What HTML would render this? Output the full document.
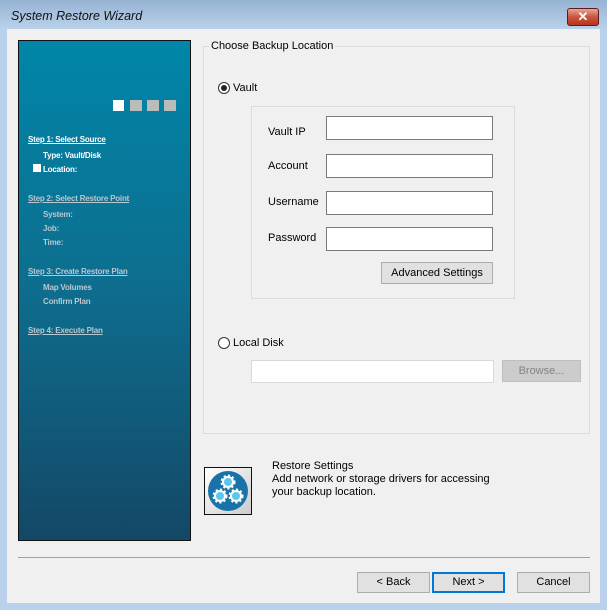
<!DOCTYPE html>
<html><head><style>
*{margin:0;padding:0;box-sizing:border-box}
body{width:607px;height:610px;background:#b9d1ea;font-family:"Liberation Sans",sans-serif;font-size:11px;color:#000;position:relative;overflow:hidden}
.a{position:absolute}
.title{left:0;top:0;width:607px;height:29px;background:linear-gradient(#97b3d3,#b9d1ea)}
.client{left:7px;top:29px;width:593px;height:574px;background:#f0f0f0}
.panel{left:18px;top:40px;width:173px;height:501px;border:1px solid #111;background:linear-gradient(#0086a8,#0e6d8e 50%,#134866)}
.s{font-size:8px;font-weight:bold;color:#fff;letter-spacing:-0.2px}
.u{text-decoration:underline}
.g{color:#b9c7d0}
.inp{background:#fff;border:1px solid #7a7a7a}
.btn{background:#e1e1e1;border:1px solid #adadad;text-align:center;font-size:11px}
.lbl{font-size:11px}
</style></head><body>
<div class="a title"></div>
<div class="a" style="left:11px;top:9px;font-style:italic;font-size:12.5px;color:#111">System Restore Wizard</div>
<div class="a" style="left:567px;top:8px;width:32px;height:18px;border:1px solid #5a1d1d;border-radius:3px;background:linear-gradient(#e8a594,#c9553f 50%,#b8341f);color:#fff;font-weight:bold;font-size:13px;text-align:center;line-height:16px">✕</div>
<div class="a client"></div>
<div class="a panel"></div>
<div class="a" style="left:113px;top:100px;width:11px;height:11px;background:#fff"></div>
<div class="a" style="left:130px;top:100px;width:12px;height:11px;background:#bbb"></div>
<div class="a" style="left:147px;top:100px;width:12px;height:11px;background:#bbb"></div>
<div class="a" style="left:164px;top:100px;width:12px;height:11px;background:#bbb"></div>
<div class="a s u" style="left:28px;top:135px">Step 1: Select Source</div>
<div class="a s" style="left:43px;top:151px">Type: Vault/Disk</div>
<div class="a" style="left:33px;top:164px;width:8px;height:8px;background:#fff"></div>
<div class="a s" style="left:43px;top:165px">Location:</div>
<div class="a s u g" style="left:28px;top:194px">Step 2: Select Restore Point</div>
<div class="a s g" style="left:43px;top:210px">System:</div>
<div class="a s g" style="left:43px;top:224px">Job:</div>
<div class="a s g" style="left:43px;top:238px">Time:</div>
<div class="a s u g" style="left:28px;top:267px">Step 3: Create Restore Plan</div>
<div class="a s g" style="left:43px;top:283px">Map Volumes</div>
<div class="a s g" style="left:43px;top:297px">Confirm Plan</div>
<div class="a s u g" style="left:28px;top:326px">Step 4: Execute Plan</div>

<div class="a" style="left:203px;top:46px;width:387px;height:388px;border:1px solid #dcdcdc"></div>
<div class="a lbl" style="left:209px;top:40px;background:#f0f0f0;padding:0 2px">Choose Backup Location</div>
<div class="a" style="left:218px;top:82px;width:12px;height:12px;border:1px solid #333;border-radius:50%;background:#fff"></div>
<div class="a" style="left:221px;top:85px;width:6px;height:6px;border-radius:50%;background:#222"></div>
<div class="a lbl" style="left:233px;top:82px">Vault</div>
<div class="a" style="left:251px;top:106px;width:264px;height:193px;border:1px solid #dcdcdc"></div>
<div class="a lbl" style="left:268px;top:126px">Vault IP</div>
<div class="a lbl" style="left:268px;top:160px">Account</div>
<div class="a lbl" style="left:268px;top:196px">Username</div>
<div class="a lbl" style="left:268px;top:232px">Password</div>
<div class="a inp" style="left:326px;top:116px;width:167px;height:24px"></div>
<div class="a inp" style="left:326px;top:154px;width:167px;height:24px"></div>
<div class="a inp" style="left:326px;top:191px;width:167px;height:24px"></div>
<div class="a inp" style="left:326px;top:227px;width:167px;height:24px"></div>
<div class="a btn" style="left:381px;top:262px;width:112px;height:22px;line-height:20px">Advanced Settings</div>
<div class="a" style="left:218px;top:337px;width:12px;height:12px;border:1px solid #333;border-radius:50%;background:#fff"></div>
<div class="a lbl" style="left:233px;top:337px">Local Disk</div>
<div class="a" style="left:251px;top:360px;width:243px;height:23px;background:#fff;border:1px solid #d9d9d9"></div>
<div class="a btn" style="left:502px;top:360px;width:79px;height:22px;line-height:20px;background:#ccc;border-color:#bfbfbf;color:#838383">Browse...</div>

<div class="a" style="left:204px;top:467px;width:48px;height:48px;border:1px solid #111;background:linear-gradient(135deg,#fff,#ccc)"></div>
<svg class="a" style="left:206px;top:469px" width="44" height="44" viewBox="0 0 44 44">
<circle cx="22" cy="22" r="20" fill="#1a73a8"/>
<g fill="#fff" stroke="#fff" stroke-width="3" stroke-dasharray="2 2"><circle cx="22" cy="13" r="6"/><circle cx="14" cy="27" r="6"/><circle cx="30" cy="27" r="6"/></g>
<g fill="#5cc6ee"><circle cx="22" cy="13" r="4"/><circle cx="14" cy="27" r="4"/><circle cx="30" cy="27" r="4"/></g>
</svg>
<div class="a lbl" style="left:272px;top:460px;line-height:13px">Restore Settings<br>Add network or storage drivers for accessing<br>your backup location.</div>

<div class="a" style="left:18px;top:557px;width:572px;height:1px;background:#a0a0a0"></div>
<div class="a btn" style="left:357px;top:572px;width:73px;height:21px;line-height:19px">&lt; Back</div>
<div class="a btn" style="left:432px;top:572px;width:73px;height:21px;line-height:17px;border:2px solid #0078d7">Next &gt;</div>
<div class="a btn" style="left:517px;top:572px;width:73px;height:21px;line-height:19px">Cancel</div>
</body></html>
